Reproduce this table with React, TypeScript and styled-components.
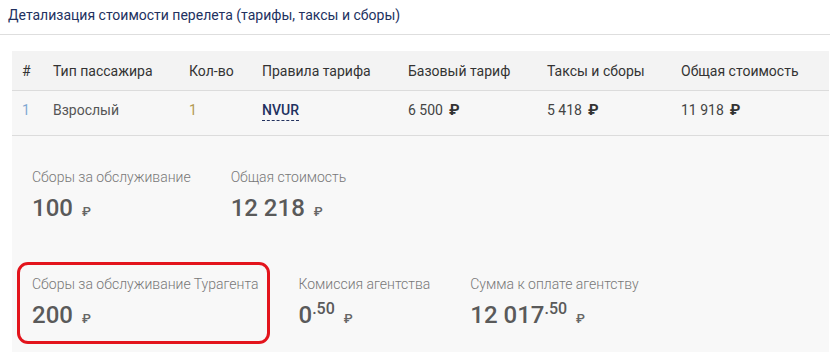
import styled, { createGlobalStyle } from "styled-components";

const GlobalStyle = createGlobalStyle`
  body {
    margin: 0;
    background: #fff;
    font-family: Roboto, "Liberation Sans", Arial, sans-serif;
  }
`;

const Title = styled.div`
  height: 35px;
  padding-left: 8px;
  display: flex;
  align-items: center;
  font-size: 14px;
  color: #22315f;
  border-bottom: 1px solid #dedede;
  box-sizing: border-box;
  padding-bottom: 4px;
`;

const Panel = styled.div`
  margin: 16px 1px 0 12px;
`;

const Row = styled.div<{ $head?: boolean }>`
  display: grid;
  grid-template-columns: 31px 136px 73px 146px 139px 134px 1fr;
  align-items: center;
  padding-left: 10px;
  padding-bottom: ${(p) => (p.$head ? "0" : "6px")};
  box-sizing: border-box;
  height: ${(p) => (p.$head ? "40px" : "45px")};
  background: ${(p) => (p.$head ? "#f3f3f3" : "#f7f7f7")};
  border-bottom: 1px solid #dcdcdc;
  font-size: 14px;
  color: ${(p) => (p.$head ? "#333" : "#555")};
`;

const Cell = styled.div<{ $color?: string }>`
  color: ${(p) => p.$color || "inherit"};
  white-space: nowrap;
`;

const Rule = styled.span`
  color: #22315f;
  font-weight: 500;
  border-bottom: 1px dashed #22315f;
  padding-bottom: 2px;
`;

const Rub = styled.span`
  margin-left: 6px;
  font-weight: 700;
  color: #333;
  font-size: 15px;
`;

const Summary = styled.div`
  background: #f8f8f8;
  padding: 33px 20px 0 20px;
  height: 216px;
  box-sizing: border-box;
  display: flex;
  flex-direction: column;
  gap: 50px;
`;

const Group = styled.div`
  display: flex;
  gap: 40px;
`;

const Item = styled.div<{ $marked?: boolean }>`
  position: relative;
  display: flex;
  flex-direction: column;
  gap: 9px;
  &::after {
    content: "";
    display: ${(p) => (p.$marked ? "block" : "none")};
    position: absolute;
    top: -14px;
    left: -15px;
    right: -12px;
    bottom: -11px;
    border: 3px solid #e3141c;
    border-radius: 11px;
  }
`;

const Label = styled.div`
  font-size: 14px;
  font-weight: 300;
  color: #777;
  white-space: nowrap;
`;

const Value = styled.div`
  font-size: 24px;
  font-weight: 500;
  color: #5a5a5a;
  white-space: nowrap;
  line-height: 28px;
`;

const Cents = styled.sup`
  font-size: 16px;
  font-weight: 500;
  vertical-align: 0;
  position: relative;
  top: -9px;
`;

const SmallRub = styled.span`
  font-size: 13px;
  margin-left: 9px;
  color: #666;
`;

const Money = ({ v, c }: { v: string; c?: string }) => (
  <Value>
    {v}
    {c && <Cents>.{c}</Cents>}
    <SmallRub>₽</SmallRub>
  </Value>
);

export default function App() {
  return (
    <>
      <GlobalStyle />
      <Title>Детализация стоимости перелета (тарифы, таксы и сборы)</Title>
      <Panel>
        <Row $head>
          <Cell>#</Cell>
          <Cell>Тип пассажира</Cell>
          <Cell>Кол-во</Cell>
          <Cell>Правила тарифа</Cell>
          <Cell>Базовый тариф</Cell>
          <Cell>Таксы и сборы</Cell>
          <Cell>Общая стоимость</Cell>
        </Row>
        <Row>
          <Cell $color="#7fa8d2">1</Cell>
          <Cell>Взрослый</Cell>
          <Cell $color="#b39a52">1</Cell>
          <Cell>
            <Rule>NVUR</Rule>
          </Cell>
          <Cell $color="#444">
            6 500<Rub>₽</Rub>
          </Cell>
          <Cell $color="#444">
            5 418<Rub>₽</Rub>
          </Cell>
          <Cell $color="#444">
            11 918<Rub>₽</Rub>
          </Cell>
        </Row>
        <Summary>
          <Group>
            <Item>
              <Label>Сборы за обслуживание</Label>
              <Money v="100" />
            </Item>
            <Item>
              <Label>Общая стоимость</Label>
              <Money v="12 218" />
            </Item>
          </Group>
          <Group>
            <Item $marked>
              <Label>Сборы за обслуживание Турагента</Label>
              <Money v="200" />
            </Item>
            <Item>
              <Label>Комиссия агентства</Label>
              <Money v="0" c="50" />
            </Item>
            <Item>
              <Label>Сумма к оплате агентству</Label>
              <Money v="12 017" c="50" />
            </Item>
          </Group>
        </Summary>
      </Panel>
    </>
  );
}
